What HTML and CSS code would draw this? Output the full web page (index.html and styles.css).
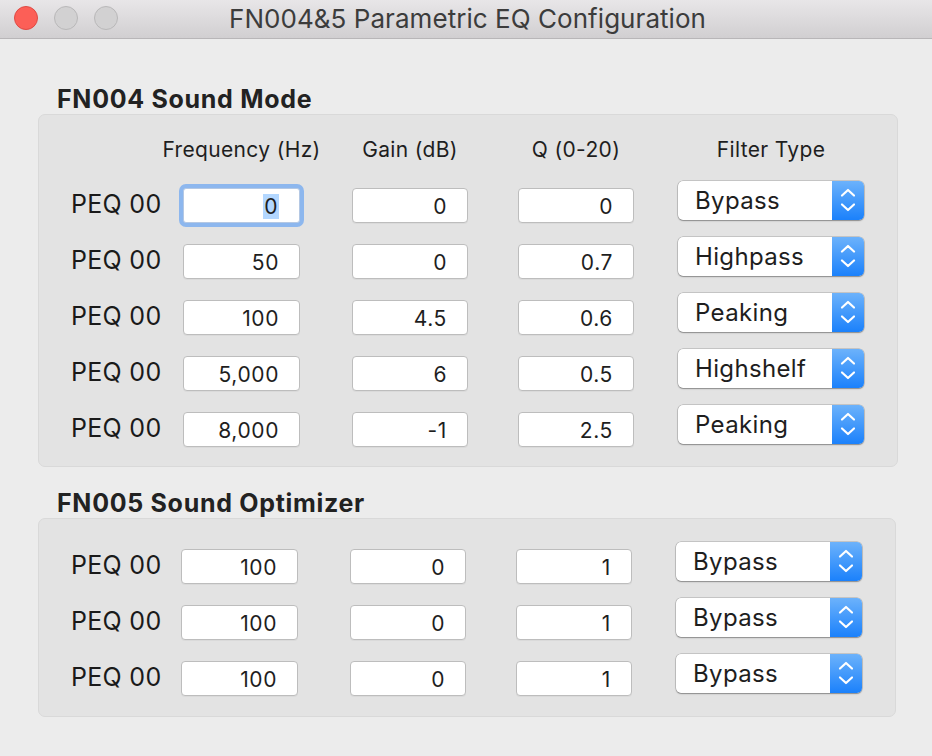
FILE: index.html
```html
<!DOCTYPE html>
<html>
<head>
<meta charset="utf-8">
<link rel="stylesheet" href="styles.css">
</head>
<body>
<div class="window">
  <header class="titlebar">
    <div class="lights">
      <span class="light red"></span>
      <span class="light gray"></span>
      <span class="light gray"></span>
    </div>
    <div class="title">FN004&amp;5 Parametric EQ Configuration</div>
  </header>
  <main class="content">
    <h2 class="heading h1st">FN004 Sound Mode</h2>
    <section class="box box1">
      <div class="grid">
        <div></div>
        <div class="colhead w117"><span>Frequency (Hz)</span></div>
        <div class="colhead w116"><span>Gain (dB)</span></div>
        <div class="colhead w116"><span>Q (0-20)</span></div>
        <div class="colhead w186"><span>Filter Type</span></div>

        <div class="label">PEQ 00</div>
        <div class="field w117 focused"><span class="sel">0</span></div>
        <div class="field w116">0</div>
        <div class="field w116">0</div>
        <div class="popup"><span class="ptext">Bypass</span><span class="arrows"><svg width="32" height="38" viewBox="0 0 32 38"><path d="M10 14.5 L16 9 L22 14.5 M10 23.5 L16 29 L22 23.5" fill="none" stroke="#fff" stroke-width="2.2" stroke-linecap="round" stroke-linejoin="round"/></svg></span></div>

        <div class="label">PEQ 00</div>
        <div class="field w117">50</div>
        <div class="field w116">0</div>
        <div class="field w116">0.7</div>
        <div class="popup"><span class="ptext">Highpass</span><span class="arrows"><svg width="32" height="38" viewBox="0 0 32 38"><path d="M10 14.5 L16 9 L22 14.5 M10 23.5 L16 29 L22 23.5" fill="none" stroke="#fff" stroke-width="2.2" stroke-linecap="round" stroke-linejoin="round"/></svg></span></div>

        <div class="label">PEQ 00</div>
        <div class="field w117">100</div>
        <div class="field w116">4.5</div>
        <div class="field w116">0.6</div>
        <div class="popup"><span class="ptext">Peaking</span><span class="arrows"><svg width="32" height="38" viewBox="0 0 32 38"><path d="M10 14.5 L16 9 L22 14.5 M10 23.5 L16 29 L22 23.5" fill="none" stroke="#fff" stroke-width="2.2" stroke-linecap="round" stroke-linejoin="round"/></svg></span></div>

        <div class="label">PEQ 00</div>
        <div class="field w117">5,000</div>
        <div class="field w116">6</div>
        <div class="field w116">0.5</div>
        <div class="popup"><span class="ptext">Highshelf</span><span class="arrows"><svg width="32" height="38" viewBox="0 0 32 38"><path d="M10 14.5 L16 9 L22 14.5 M10 23.5 L16 29 L22 23.5" fill="none" stroke="#fff" stroke-width="2.2" stroke-linecap="round" stroke-linejoin="round"/></svg></span></div>

        <div class="label">PEQ 00</div>
        <div class="field w117">8,000</div>
        <div class="field w116">-1</div>
        <div class="field w116">2.5</div>
        <div class="popup"><span class="ptext">Peaking</span><span class="arrows"><svg width="32" height="38" viewBox="0 0 32 38"><path d="M10 14.5 L16 9 L22 14.5 M10 23.5 L16 29 L22 23.5" fill="none" stroke="#fff" stroke-width="2.2" stroke-linecap="round" stroke-linejoin="round"/></svg></span></div>
      </div>
    </section>

    <h2 class="heading h2nd">FN005 Sound Optimizer</h2>
    <section class="box box2">
      <div class="grid">
        <div class="label">PEQ 00</div>
        <div class="field w117">100</div>
        <div class="field w116">0</div>
        <div class="field w116">1</div>
        <div class="popup"><span class="ptext">Bypass</span><span class="arrows"><svg width="32" height="38" viewBox="0 0 32 38"><path d="M10 14.5 L16 9 L22 14.5 M10 23.5 L16 29 L22 23.5" fill="none" stroke="#fff" stroke-width="2.2" stroke-linecap="round" stroke-linejoin="round"/></svg></span></div>

        <div class="label">PEQ 00</div>
        <div class="field w117">100</div>
        <div class="field w116">0</div>
        <div class="field w116">1</div>
        <div class="popup"><span class="ptext">Bypass</span><span class="arrows"><svg width="32" height="38" viewBox="0 0 32 38"><path d="M10 14.5 L16 9 L22 14.5 M10 23.5 L16 29 L22 23.5" fill="none" stroke="#fff" stroke-width="2.2" stroke-linecap="round" stroke-linejoin="round"/></svg></span></div>

        <div class="label">PEQ 00</div>
        <div class="field w117">100</div>
        <div class="field w116">0</div>
        <div class="field w116">1</div>
        <div class="popup"><span class="ptext">Bypass</span><span class="arrows"><svg width="32" height="38" viewBox="0 0 32 38"><path d="M10 14.5 L16 9 L22 14.5 M10 23.5 L16 29 L22 23.5" fill="none" stroke="#fff" stroke-width="2.2" stroke-linecap="round" stroke-linejoin="round"/></svg></span></div>
      </div>
    </section>
  </main>
</div>
</body>
</html>
```

FILE: styles.css
```css
* { box-sizing: border-box; }
html, body { margin: 0; padding: 0; }
body {
  width: 932px;
  height: 756px;
  background: #ececec;
  font-family: "Inter", "Liberation Sans", sans-serif;
  color: #1e1e1e;
  overflow: hidden;
}
.window { width: 932px; height: 756px; background: #ececec; }

.titlebar {
  position: relative;
  height: 39px;
  background: linear-gradient(#e8e6e8, #d1cfd1);
  border-bottom: 1px solid #b8b6b8;
  display: flex;
  align-items: center;
  justify-content: center;
}
.lights {
  position: absolute;
  left: 14px;
  top: 6px;
  display: flex;
  gap: 16px;
}
.light {
  width: 24px;
  height: 24px;
  border-radius: 50%;
}
.light.red { background: #fc5f57; border: 1px solid #df4a44; }
.light.gray { background: #d2d1d2; border: 1px solid #b9b8b9; }
.title {
  font-size: 26px;
  color: #3c3c3c;
  line-height: 38px;
  letter-spacing: 0.05px;
  margin-left: 3px;
}

.content { padding: 0 34px 0 38px; }
.heading {
  margin: 0;
  font-size: 25px;
  font-weight: 700;
  line-height: 30px;
  padding-left: 19px;
  letter-spacing: 0.7px;
  color: #222;
}
.h1st { margin-top: 45px; margin-bottom: 0; }
.h2nd { margin-top: 21px; margin-bottom: 0; }

.box {
  background: #e3e3e3;
  border: 1px solid #d9d9d9;
  border-radius: 7px;
}
.box1 { width: 860px; height: 353px; padding-top: 6px; padding-left: 32px; }
.box2 { width: 858px; height: 199px; padding-top: 19px; padding-left: 30px; }
.box2 .label { padding-left: 2px; }

.grid {
  display: grid;
  grid-template-columns: 112px 169px 166px 160px 186px;
  grid-auto-rows: 56px;
  align-items: center;
}
.colhead {
  display: flex;
  justify-content: center;
  white-space: nowrap;
  font-size: 21px;
  letter-spacing: 0.35px;
  color: #1e1e1e;
}
.w117 { width: 117px; }
.w116 { width: 116px; }
.w186 { width: 186px; }

.label {
  font-size: 25px;
  letter-spacing: 0.3px;
  color: #1a1a1a;
  margin-bottom: 3px;
}
.field {
  height: 35px;
  background: #fff;
  border: 1px solid #bdbdbd;
  border-radius: 4px;
  box-shadow: 0 1px 0 rgba(0,0,0,0.04);
  text-align: right;
  padding-right: 20px;
  padding-top: 1px;
  font-size: 21px;
  letter-spacing: 0.6px;
  line-height: 33px;
  color: #1e1e1e;
}
.field.focused {
  border-color: #b4c8e4;
  box-shadow: 0 0 0 4px #8db7ee;
  border-radius: 3px;
}
.sel { background: #b3d7ff; padding: 0 1px; }

.popup {
  width: 186px;
  height: 39px;
  margin-bottom: 10px;
  display: flex;
  background: #fff;
  border-radius: 5px;
  box-shadow: 0 0 0 0.5px rgba(0,0,0,0.25), 0 1px 1.5px rgba(0,0,0,0.3);
  overflow: hidden;
}
.ptext {
  flex: 1;
  padding-left: 17px;
  font-size: 24px;
  letter-spacing: 0.35px;
  line-height: 39px;
  color: #1e1e1e;
}
.arrows {
  width: 32px;
  height: 39px;
  background: linear-gradient(#6cb2fb, #1b81fb);
  display: flex;
  align-items: center;
  justify-content: center;
}
.arrows svg { display: block; }
```
